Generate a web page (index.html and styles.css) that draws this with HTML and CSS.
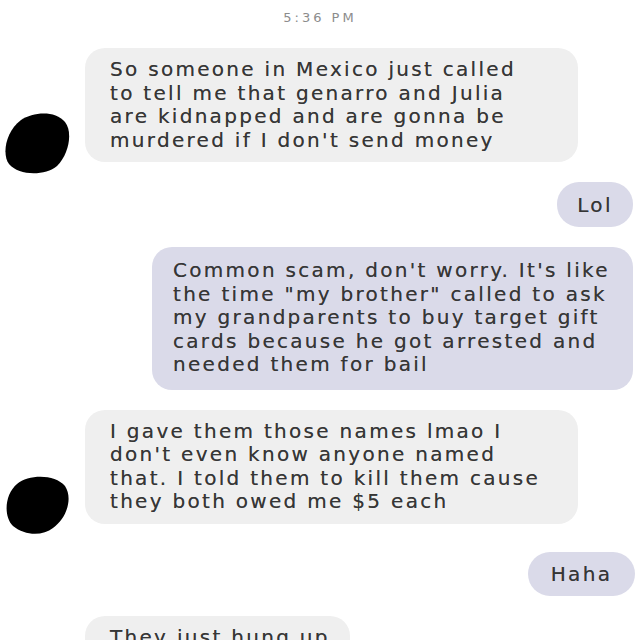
FILE: index.html
```html
<!DOCTYPE html>
<html lang="en">
<head>
<meta charset="utf-8">
<title>Chat</title>
<link rel="stylesheet" href="styles.css">
</head>
<body>
<div class="chat">
  <div class="time">5:36 PM</div>

  <div class="row received">
    <svg class="avatar" viewBox="0 0 67 64" aria-hidden="true">
      <path d="M18 10 C30 2 52 0 62 12 C70 22 66 44 54 56 C42 66 16 66 6 54 C-1 45 2 22 18 10 Z" fill="#000"/>
    </svg>
    <div class="bubble in wide">So someone in Mexico just called<br>to tell me that genarro and Julia<br>are kidnapped and are gonna be<br>murdered if I don't send money</div>
  </div>

  <div class="row sent">
    <div class="pill lol">Lol</div>
  </div>

  <div class="row sent">
    <div class="bubble out">Common scam, don't worry. It's like<br>the time "my brother" called to ask<br>my grandparents to buy target gift<br>cards because he got arrested and<br>needed them for bail</div>
  </div>

  <div class="row received">
    <svg class="avatar" viewBox="0 0 67 64" aria-hidden="true">
      <path d="M14 12 C26 2 52 2 62 14 C70 26 64 46 50 56 C40 64 22 64 10 54 C0 44 2 22 14 12 Z" fill="#000"/>
    </svg>
    <div class="bubble in wide">I gave them those names lmao I<br>don't even know anyone named<br>that. I told them to kill them cause<br>they both owed me $5 each</div>
  </div>

  <div class="row sent gap-top">
    <div class="pill haha">Haha</div>
  </div>

  <div class="row received">
    <div class="avatar-space"></div>
    <div class="bubble in short">They just hung up</div>
  </div>
</div>
</body>
</html>
```
FILE: styles.css
```css
html, body {
  margin: 0;
  padding: 0;
  background: #ffffff;
}

body {
  width: 640px;
  height: 640px;
  overflow: hidden;
  font-family: "DejaVu Sans", Verdana, sans-serif;
  color: #363636;
}

.chat {
  display: flex;
  flex-direction: column;
  gap: 20px;
}

.time {
  text-align: center;
  font-size: 13px;
  line-height: 16px;
  letter-spacing: 3px;
  color: #8c8c8c;
  padding-top: 10px;
  margin-bottom: 2px;
}

.row {
  display: flex;
  align-items: flex-end;
}

.row.received {
  padding-left: 3px;
  gap: 15px;
}

.row.sent {
  justify-content: flex-end;
}

.row.gap-top {
  margin-top: 8px;
}

.avatar {
  width: 67px;
  height: 64px;
  flex: none;
  margin-bottom: -12px;
}

.avatar-space {
  width: 67px;
  flex: none;
}

.bubble {
  font-size: 20px;
  line-height: 23.5px;
  letter-spacing: 2.3px;
  border-radius: 20px;
  white-space: nowrap;
  text-shadow: 0 0 0.5px rgba(40, 40, 40, 0.6);
}

.bubble.in {
  background: #efefef;
  padding: 10px 20px 10px 25px;
}

.bubble.in.wide {
  width: 448px;
}

.bubble.in.short {
  width: 220px;
}

.bubble.out {
  background: #dadae9;
  width: 442px;
  padding: 12px 18px 13px 21px;
  margin-right: 7px;
}

.pill {
  background: #dadae9;
  height: 45px;
  border-radius: 22px;
  font-size: 20px;
  letter-spacing: 2.3px;
  display: flex;
  align-items: center;
  justify-content: center;
  text-shadow: 0 0 0.5px rgba(40, 40, 40, 0.6);
}

.pill.lol {
  width: 76px;
  margin-right: 7px;
}

.pill.haha {
  width: 107px;
  height: 44px;
  margin-right: 5px;
}
```
